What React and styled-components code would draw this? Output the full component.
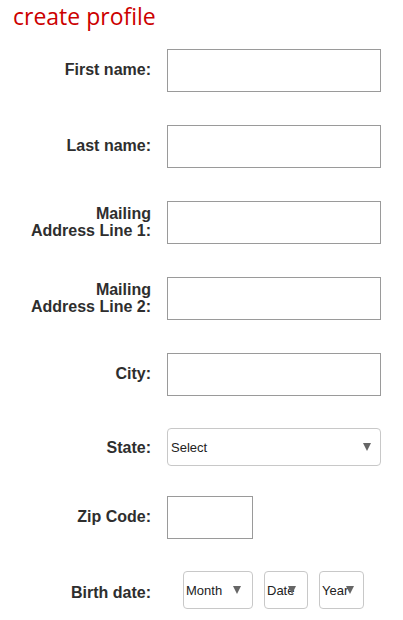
import React from "react";
import styled, { createGlobalStyle } from "styled-components";

const Global = createGlobalStyle`
  html, body { margin: 0; padding: 0; background: #fff; }
  body { font-family: "Liberation Sans", Arial, sans-serif; }
  * { box-sizing: border-box; }
`;

const Page = styled.div`
  width: 403px;
  padding: 0 0 0 13px;
`;

const Title = styled.h1`
  margin: 0;
  font-family: "Open Sans", "Noto Sans", sans-serif;
  font-weight: 400;
  font-size: 23px;
  line-height: 32px;
  color: #cc0000;
  letter-spacing: 0;
`;

const Form = styled.div`
  display: flex;
  flex-direction: column;
  margin-top: 17px;
`;

const Row = styled.div`
  display: grid;
  grid-template-columns: 138px auto;
  column-gap: 16px;
  align-items: center;
  margin-top: ${(p) => p.$mt || 0}px;
`;

const Label = styled.label`
  text-align: right;
  font-weight: 700;
  font-size: 16px;
  line-height: 17px;
  color: #2e2e2e;
  margin-top: ${(p) => p.$shift || -2}px;
`;

const TextInput = styled.div`
  width: ${(p) => p.$w || 214}px;
  height: 43px;
  border: 1px solid #9a9a9a;
  background: #fff;
`;

const Select = styled.div`
  position: relative;
  display: flex;
  align-items: center;
  width: ${(p) => p.$w}px;
  height: 38px;
  padding-left: ${(p) => p.$pl || 3}px;
  border: 1px solid #c8c8c8;
  border-radius: 4px;
  background: #fff;
  font-family: "Liberation Sans", Arial, sans-serif;
  font-size: 13px;
  color: #222;
`;

const Arrow = styled.span`
  position: absolute;
  right: ${(p) => p.$r || 10}px;
  top: 14px;
  width: 0;
  height: 0;
  border-left: 4.5px solid transparent;
  border-right: 4.5px solid transparent;
  border-top: 8px solid #666;
`;

const DateGroup = styled.div`
  display: flex;
  gap: 11px;
  padding-left: 16px;
`;

function Field({ label, mt, shift, children }) {
  return (
    <Row $mt={mt}>
      <Label $shift={shift}>{label}</Label>
      {children}
    </Row>
  );
}

export default function App() {
  return (
    <>
      <Global />
      <Page>
        <Title>create profile</Title>
        <Form>
          <Field label="First name:">
            <TextInput />
          </Field>
          <Field label="Last name:" mt={33}>
            <TextInput />
          </Field>
          <Field
            label={
              <>
                Mailing
                <br />
                Address Line 1:
              </>
            }
            mt={33}
          >
            <TextInput />
          </Field>
          <Field
            label={
              <>
                Mailing
                <br />
                Address Line 2:
              </>
            }
            mt={33}
          >
            <TextInput />
          </Field>
          <Field label="City:" mt={33}>
            <TextInput />
          </Field>
          <Field label="State:" mt={32} shift={1}>
            <Select $w={214}>
              Select
              <Arrow $r={9} />
            </Select>
          </Field>
          <Field label="Zip Code:" mt={30}>
            <TextInput $w={86} />
          </Field>
          <Field label="Birth date:" mt={32} shift={4}>
            <DateGroup>
              <Select $w={70} $pl={2}>
                Month
                <Arrow $r={11} />
              </Select>
              <Select $w={44} $pl={2}>
                Date
                <Arrow $r={11} />
              </Select>
              <Select $w={45} $pl={2}>
                Year
                <Arrow $r={9} />
              </Select>
            </DateGroup>
          </Field>
        </Form>
      </Page>
    </>
  );
}
